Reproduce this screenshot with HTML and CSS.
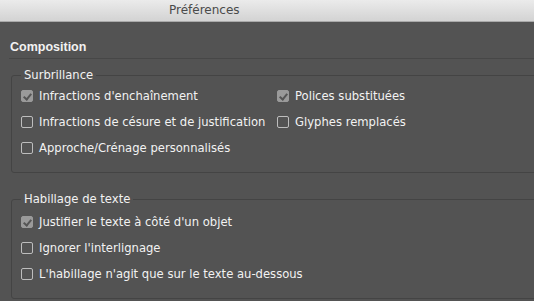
FILE: index.html
```html
<!DOCTYPE html>
<html lang="fr">
<head>
    <meta charset="UTF-8">
    <title>Préférences</title>
    <link rel="stylesheet" href="styles.css">
</head>
<body>
    <div class="titlebar">
        <span class="title">Préférences</span>
    </div>

    <div class="panel">
        <h2 class="section-title">Composition</h2>

        <fieldset class="group">
            <legend>Surbrillance</legend>
            <div class="options two-cols">
                <label class="option"><span class="box checked"></span>Infractions d'enchaînement</label>
                <label class="option"><span class="box checked"></span>Polices substituées</label>
                <label class="option"><span class="box"></span>Infractions de césure et de justification</label>
                <label class="option"><span class="box"></span>Glyphes remplacés</label>
                <label class="option"><span class="box"></span>Approche/Crénage personnalisés</label>
            </div>
        </fieldset>

        <fieldset class="group">
            <legend>Habillage de texte</legend>
            <div class="options">
                <label class="option"><span class="box checked"></span>Justifier le texte à côté d'un objet</label>
                <label class="option"><span class="box"></span>Ignorer l'interlignage</label>
                <label class="option"><span class="box"></span>L'habillage n'agit que sur le texte au-dessous</label>
            </div>
        </fieldset>
    </div>
</body>
</html>
```

FILE: styles.css
```css
* {
    box-sizing: border-box;
    margin: 0;
    padding: 0;
}

body {
    font-family: 'DejaVu Sans', 'Liberation Sans', sans-serif;
    font-size: 11.6px;
    background-color: #535353;
    color: #f2f2f2;
    overflow: hidden;
}

.titlebar {
    height: 22px;
    padding-left: 169px;
    background: linear-gradient(#ebebeb, #d3d3d3);
    border-bottom: 1px solid #a9a9a9;
    color: #4a4a4a;
    font-size: 12px;
    line-height: 21px;
}

.panel {
    padding: 18px 0 0 9px;
    margin-right: -20px;
}

.section-title {
    font-family: 'Liberation Sans', Arial, sans-serif;
    font-size: 12.5px;
    font-weight: bold;
    line-height: 14px;
    padding-left: 1px;
    padding-bottom: 4px;
    border-bottom: 1px solid #474747;
}

.group {
    margin: 9px 0 0 2px;
    border: 1px solid #444;
    border-radius: 3px;
    padding: 6px 0 16px 9px;
}

.group + .group {
    margin-top: 19px;
    padding-top: 8px;
}

.group legend {
    margin-left: 0;
    padding: 0 3px;
    line-height: 14px;
}

.options {
    display: grid;
    row-gap: 10px;
}

.two-cols {
    grid-template-columns: 256px 1fr;
}

.option {
    display: flex;
    align-items: center;
    gap: 6px;
    height: 16px;
    white-space: nowrap;
}

.box {
    width: 12px;
    height: 12px;
    flex: none;
    border: 1px solid #bdbdbd;
    border-radius: 2px;
    position: relative;
}

.box.checked {
    background-color: #9a9a9a;
    border-color: #9a9a9a;
}

.box.checked::after {
    content: "";
    position: absolute;
    left: 3px;
    top: 1px;
    width: 3px;
    height: 6px;
    border: solid #555;
    border-width: 0 2px 2px 0;
    transform: rotate(40deg);
}
```
